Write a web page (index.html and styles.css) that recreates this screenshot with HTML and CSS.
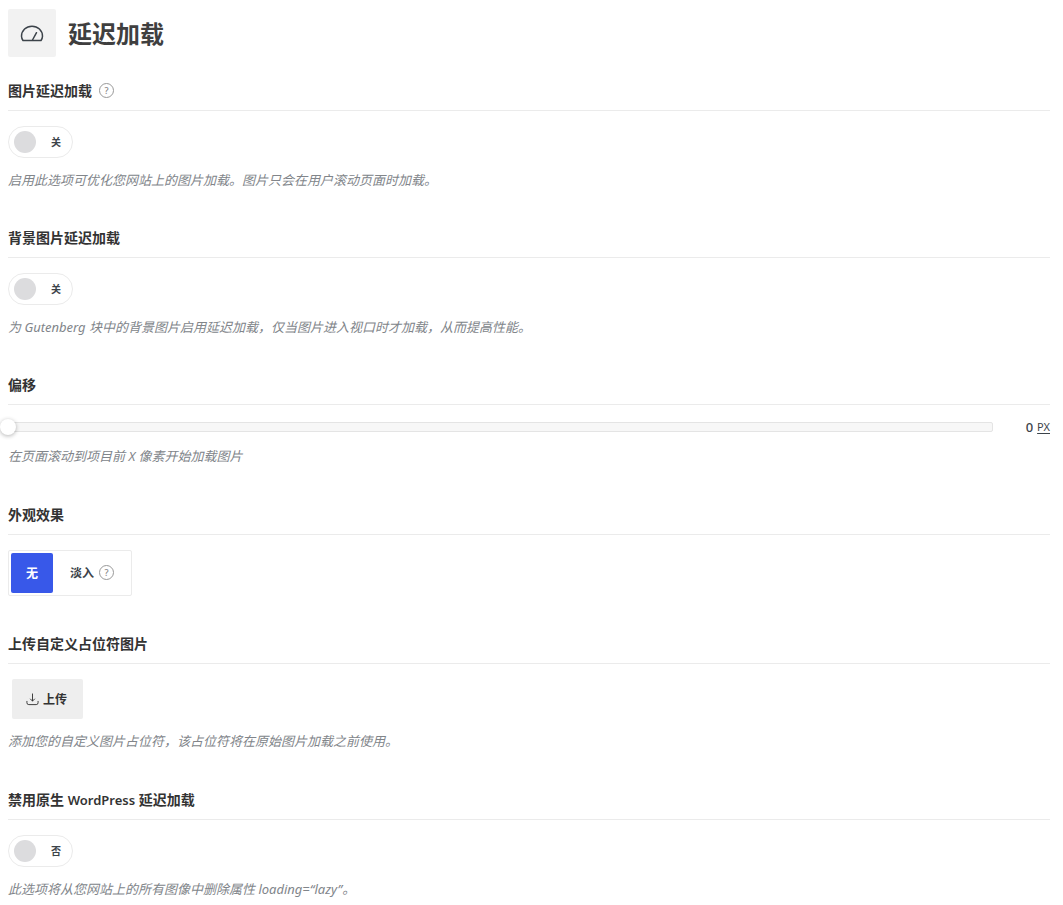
FILE: index.html
```html
<!DOCTYPE html>
<html lang="zh-CN">
<head>
<meta charset="utf-8">
<meta name="viewport" content="width=device-width, initial-scale=1">
<title>延迟加载</title>
<link rel="stylesheet" href="styles.css">
</head>
<body>
<main class="options">
  <header class="page-title">
    <span class="page-icon">
      <svg width="24" height="24" viewBox="0 0 24 24" fill="none" stroke="currentColor" stroke-width="1.5" stroke-linecap="round" stroke-linejoin="round" aria-hidden="true">
        <path d="M3 19.500C1.900 17.900 1.500 16.800 1.500 15.300C1.500 9.500 6.200 5.200 12 5.200S22.500 9.500 22.500 15.300C22.500 16.800 22.100 17.900 21 19.500Z"/>
        <path d="M12.500 19L16.500 11.700"/>
      </svg>
    </span>
    <h1>延迟加载</h1>
  </header>

  <section class="option">
    <h2>图片延迟加载 <button class="hint" type="button" aria-label="帮助">?</button></h2>
    <label class="toggle"><input type="checkbox" role="switch" aria-label="图片延迟加载"><span>关</span></label>
    <p>启用此选项可优化您网站上的图片加载。图片只会在用户滚动页面时加载。</p>
  </section>

  <section class="option">
    <h2>背景图片延迟加载</h2>
    <label class="toggle"><input type="checkbox" role="switch" aria-label="背景图片延迟加载"><span>关</span></label>
    <p>为 Gutenberg 块中的背景图片启用延迟加载，仅当图片进入视口时才加载，从而提高性能。</p>
  </section>

  <section class="option roomy">
    <h2>偏移</h2>
    <div class="slider">
      <div class="track"><input class="range" type="range" min="0" max="1000" value="0" aria-label="偏移"></div>
      <input class="amount" type="text" value="0" aria-label="偏移数值">
      <button class="unit" type="button">PX</button>
    </div>
    <p>在页面滚动到项目前 X 像素开始加载图片</p>
  </section>

  <section class="option">
    <h2>外观效果</h2>
    <div class="choices">
      <button class="choice selected" type="button" aria-pressed="true">无</button>
      <button class="choice" type="button" aria-pressed="false">淡入 <span class="hint">?</span></button>
    </div>
  </section>

  <section class="option roomy">
    <h2>上传自定义占位符图片</h2>
    <div class="uploader">
      <button class="upload" type="button">
        <svg width="13" height="13" viewBox="0 0 14 14" fill="none" stroke="currentColor" stroke-width="1" stroke-linecap="round" stroke-linejoin="round" aria-hidden="true">
          <path d="M7 1V8.500M4.800 6.500L7 8.700L9.200 6.500M1 9V10.500Q1 12.500 3 12.500H11Q13 12.500 13 10.500V9"/>
        </svg>
        上传
      </button>
    </div>
    <p>添加您的自定义图片占位符，该占位符将在原始图片加载之前使用。</p>
  </section>

  <section class="option">
    <h2><span>禁用原生 <span class="latin" lang="en">WordPress</span> 延迟加载</span></h2>
    <label class="toggle"><input type="checkbox" role="switch" aria-label="禁用原生 WordPress 延迟加载"><span>否</span></label>
    <p>此选项将从您网站上的所有图像中删除属性 loading=“lazy”。</p>
  </section>
</main>
</body>
</html>
```

FILE: styles.css
```css
* {
  box-sizing: border-box;
}

body {
  margin: 0;
  background: #fff;
  color: #3c434a;
  font: 13px/20px "Noto Sans", "Noto Sans CJK SC", sans-serif;
  overflow-x: hidden;
}

button,
input {
  margin: 0;
  padding: 0;
  border: 0;
  background: none;
  color: inherit;
  font: inherit;
}

h1,
h2,
p {
  margin: 0;
}

.options {
  padding: 9px 13px 0 8px;
}

.page-title {
  display: flex;
  align-items: flex-start;
  gap: 12px;
  margin-bottom: 22px;
}

.page-icon {
  display: grid;
  place-items: center;
  width: 48px;
  height: 48px;
  border-radius: 2px;
  background: #f2f2f2;
}

h1 {
  color: #3f3f3f;
  font-size: 24px;
  line-height: 50px;
  font-weight: 600;
}

.option {
  padding-bottom: 38px;
}

.option.roomy {
  padding-bottom: 39px;
}

.option:last-child {
  padding-bottom: 0;
}

h2 {
  display: flex;
  align-items: center;
  gap: 7px;
  height: 30px;
  margin-bottom: 15px;
  padding-bottom: 10px;
  border-bottom: 1px solid #ebebeb;
  color: #333;
  font-size: 14px;
  font-weight: 600;
  white-space: nowrap;
}

.latin {
  font-size: 13px;
}

p {
  margin-top: 12px;
  color: #81858a;
  font-style: italic;
}

.hint {
  display: grid;
  place-items: center;
  width: 15px;
  height: 15px;
  border: 1px solid #999;
  border-radius: 50%;
  color: #888;
  font-size: 9px;
  line-height: 13px;
  font-weight: 500;
}

.toggle {
  display: flex;
  align-items: center;
  justify-content: space-between;
  width: 65px;
  height: 32px;
  padding: 0 11px 0 5px;
  border: 1px solid #ebebeb;
  border-radius: 16px;
  font-size: 10px;
  font-weight: 700;
}

.toggle input {
  appearance: none;
  width: 22px;
  height: 22px;
  border-radius: 50%;
  background: #dcdcde;
}

.slider {
  display: flex;
  align-items: center;
  height: 14px;
}

.track {
  display: flex;
  align-items: center;
  flex: 1;
  height: 10px;
  border: 1px solid #e4e4e4;
  border-radius: 2px;
  background: #f7f7f7;
}

.range {
  appearance: none;
  flex: 1;
  height: 16px;
  margin: 0 -9px;
}

.range::-webkit-slider-thumb {
  appearance: none;
  width: 16px;
  height: 16px;
  border-radius: 50%;
  background: #fff;
  box-shadow: 0 1px 4px rgba(0, 0, 0, 0.3);
}

.amount {
  width: 40px;
  text-align: right;
  font-weight: 500;
}

.unit {
  margin-left: 4px;
  padding-bottom: 2px;
  font-size: 11px;
  line-height: 15px;
  text-decoration: underline;
  text-underline-offset: 2px;
}

.choices {
  display: inline-flex;
  vertical-align: top;
  height: 46px;
  padding: 2px;
  border: 1px solid #ebebeb;
  border-radius: 2px;
}

.choice {
  display: flex;
  align-items: center;
  gap: 5px;
  padding: 2px 15px 0 17px;
  font-size: 12px;
  font-weight: 600;
}

.choice .hint {
  margin-bottom: 4px;
}

.choice.selected {
  padding: 2px 15px 0;
  border-radius: 2px;
  background: #3858e9;
  color: #fff;
}

.uploader {
  height: 40px;
  padding-left: 4px;
}

.upload {
  display: flex;
  align-items: center;
  gap: 4px;
  height: 40px;
  padding: 2px 16px 0 14px;
  border-radius: 2px;
  background: #eee;
  color: #333;
  font-size: 12px;
  font-weight: 600;
}

.upload svg {
  margin-bottom: 2px;
}
```
